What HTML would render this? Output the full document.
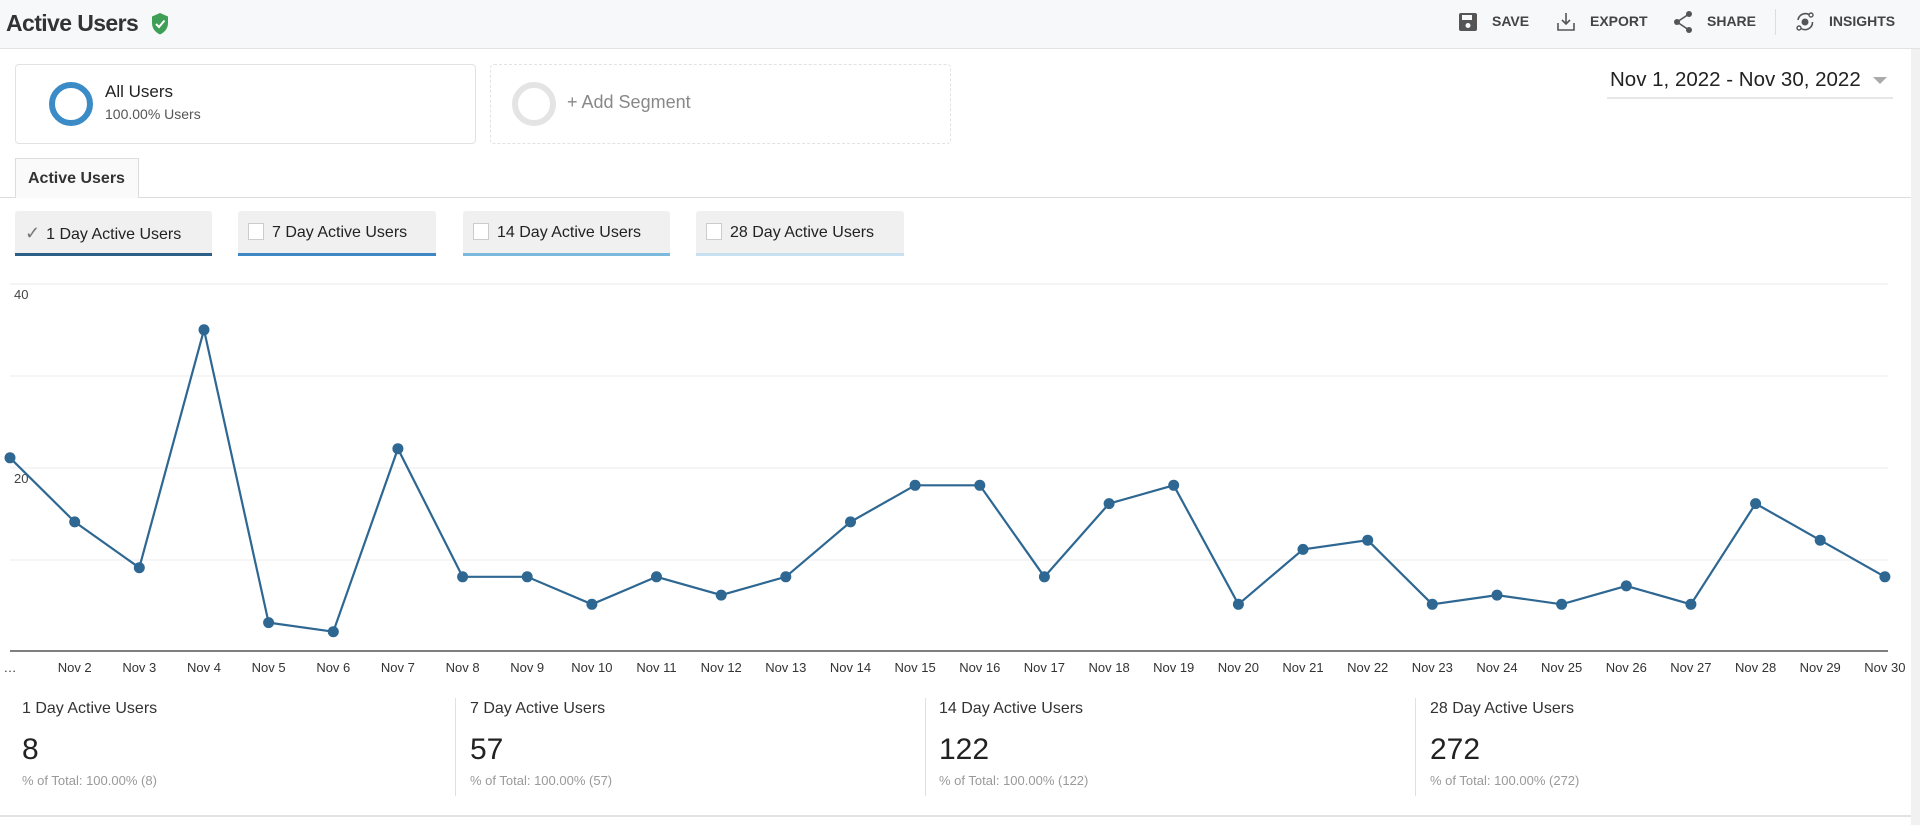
<!DOCTYPE html>
<html><head><meta charset="utf-8"><style>
*{margin:0;padding:0;box-sizing:border-box}
body{width:1920px;height:825px;background:#fff;font-family:"Liberation Sans",Arial,sans-serif;color:#222;position:relative;overflow:hidden}
.hdr{position:absolute;left:0;top:0;width:1920px;height:49px;background:#f7f8f9;border-bottom:1px solid #e3e3e3}
.title{position:absolute;left:6px;top:10px;font-size:23px;font-weight:bold;color:#333;letter-spacing:-0.6px}
.act{position:absolute;top:13px;font-size:14px;font-weight:bold;color:#444}
.rs{position:absolute;right:0;top:49px;width:9px;height:776px;background:#f1f1f1}
.seg{position:absolute;top:64px;height:80px;border:1px solid #e2e2e2;border-radius:4px}
.tab{position:absolute;left:15px;top:158px;width:124px;height:40px;border:1px solid #ddd;border-bottom:none;background:#fafafa;font-size:16px;font-weight:bold;padding:11px 0 0 12px;color:#333}
.mb{position:absolute;top:211px;height:45px;background:#f0f0f0;border-radius:3px 3px 0 0;font-size:16px;color:#222;padding:12px 0 0 10px}
.cb{display:inline-block;width:16px;height:17px;border:1px solid #ccc;background:#fff;vertical-align:-3px;margin-right:8px}
.st{position:absolute;top:700px}
.st .a{font-size:16px;color:#333}
.st .b{font-size:30px;color:#222;margin-top:15px}
.st .c{font-size:13px;color:#999;margin-top:6px}
.sep{position:absolute;top:698px;width:1px;height:98px;background:#e0e0e0}
</style></head><body>
<div class="hdr">
<div class="title">Active Users</div>
<svg style="position:absolute;left:150px;top:12px" width="20" height="24" viewBox="0 0 20 24"><path d="M10 1 L18 4.5 V11 C18 16.5 14.5 20.5 10 22.5 C5.5 20.5 2 16.5 2 11 V4.5 Z" fill="#3f9f57"/><path d="M6 12 L9 15 L14.5 8.5" stroke="#fff" stroke-width="2" fill="none"/></svg>
<svg style="position:absolute;left:1458px;top:12px" width="20" height="20" viewBox="0 0 20 20"><rect x="1" y="1" width="18" height="18" rx="2" fill="#555"/><rect x="4" y="3" width="10" height="5" fill="#f7f8f9"/><circle cx="10" cy="13.5" r="2.5" fill="#f7f8f9"/></svg>
<div class="act" style="left:1492px">SAVE</div>
<svg style="position:absolute;left:1556px;top:11px" width="20" height="22" viewBox="0 0 20 22"><path d="M10 2 V13 M6 9 L10 13 L14 9 M2 12 V19 H18 V12" stroke="#555" stroke-width="1.6" fill="none"/></svg>
<div class="act" style="left:1590px">EXPORT</div>
<svg style="position:absolute;left:1672px;top:10px" width="22" height="24" viewBox="0 0 22 24"><circle cx="17" cy="4" r="3" fill="#555"/><circle cx="5" cy="12" r="3" fill="#555"/><circle cx="17" cy="20" r="3" fill="#555"/><path d="M17 4 L5 12 L17 20" stroke="#555" stroke-width="1.6" fill="none"/></svg>
<div class="act" style="left:1707px">SHARE</div>
<div style="position:absolute;left:1775px;top:9px;width:1px;height:26px;background:#ddd"></div>
<svg style="position:absolute;left:1794px;top:10px" width="22" height="24" viewBox="0 0 22 24"><circle cx="11" cy="12" r="3.5" fill="#555"/><path d="M4 10 A7.5 7.5 0 0 1 15 4.5 M18.5 12 A7.5 7.5 0 0 1 7 18.5" stroke="#555" stroke-width="1.6" fill="none"/><circle cx="17" cy="5" r="2" fill="none" stroke="#555" stroke-width="1.4"/><circle cx="5" cy="18" r="2" fill="none" stroke="#555" stroke-width="1.4"/></svg>
<div class="act" style="left:1829px">INSIGHTS</div>
</div>
<div class="rs"></div>
<div class="seg" style="left:15px;width:461px">
<div style="position:absolute;left:33px;top:17px;width:44px;height:44px;border:6px solid #3b8bc7;border-radius:50%"></div>
<div style="position:absolute;left:89px;top:17px;font-size:17px;color:#222">All Users</div>
<div style="position:absolute;left:89px;top:41px;font-size:14px;color:#555">100.00% Users</div>
</div>
<div class="seg" style="left:490px;width:461px;border:1px dashed #e2e2e2">
<div style="position:absolute;left:21px;top:17px;width:44px;height:44px;border:6px solid #e4e4e4;border-radius:50%"></div>
<div style="position:absolute;left:76px;top:27px;font-size:18px;color:#888">+ Add Segment</div>
</div>
<div style="position:absolute;left:1610px;top:68px;font-size:20.5px;color:#222">Nov 1, 2022 - Nov 30, 2022</div>
<div style="position:absolute;left:1873px;top:77px;width:0;height:0;border-left:7px solid transparent;border-right:7px solid transparent;border-top:7px solid #aaa"></div>
<div style="position:absolute;left:1607px;top:97px;width:286px;height:2px;background:#e6e6e6"></div>
<div style="position:absolute;left:0;top:197px;width:1911px;height:1px;background:#ddd"></div>
<div class="tab">Active Users</div>
<div class="mb" style="left:15px;width:197px;border-bottom:3px solid #2c5f88"><span style="color:#777;font-size:18px;margin-right:6px">✓</span>1 Day Active Users</div>
<div class="mb" style="left:238px;width:198px;border-bottom:3px solid #3d88c4"><span class="cb"></span>7 Day Active Users</div>
<div class="mb" style="left:463px;width:207px;border-bottom:3px solid #7bb9dd"><span class="cb"></span>14 Day Active Users</div>
<div class="mb" style="left:696px;width:208px;border-bottom:3px solid #c8e1f0"><span class="cb"></span>28 Day Active Users</div>
<svg style="position:absolute;left:0;top:270px" width="1911" height="420" viewBox="0 270 1911 420">
<g stroke="#ebebeb" stroke-width="1"><line x1="10" y1="284" x2="1888" y2="284"/><line x1="10" y1="376" x2="1888" y2="376"/><line x1="10" y1="468" x2="1888" y2="468"/><line x1="10" y1="560" x2="1888" y2="560"/></g>
<line x1="10" y1="651" x2="1888" y2="651" stroke="#555" stroke-width="1.5"/>
<text x="14" y="299" font-size="13" fill="#444" font-family="Liberation Sans">40</text>
<text x="14" y="483" font-size="13" fill="#444" font-family="Liberation Sans">20</text>
<polyline fill="none" stroke="#2d6792" stroke-width="2.2" points="10,457.8 74.7,521.9 139.3,567.7 204,329.8 268.6,622.6 333.3,631.7 397.9,448.7 462.6,576.8 527.2,576.8 591.9,604.3 656.5,576.8 721.2,595.1 785.8,576.8 850.5,521.9 915.1,485.3 979.8,485.3 1044.4,576.8 1109.1,503.6 1173.7,485.3 1238.4,604.3 1303,549.4 1367.7,540.2 1432.3,604.3 1497,595.1 1561.6,604.3 1626.3,585.9 1690.9,604.3 1755.6,503.6 1820.2,540.2 1884.9,576.8"/>
<g fill="#2d6792">
<circle cx="10" cy="457.8" r="5.5"/><circle cx="74.7" cy="521.9" r="5.5"/><circle cx="139.3" cy="567.7" r="5.5"/><circle cx="204" cy="329.8" r="5.5"/><circle cx="268.6" cy="622.6" r="5.5"/><circle cx="333.3" cy="631.7" r="5.5"/><circle cx="397.9" cy="448.7" r="5.5"/><circle cx="462.6" cy="576.8" r="5.5"/><circle cx="527.2" cy="576.8" r="5.5"/><circle cx="591.9" cy="604.3" r="5.5"/><circle cx="656.5" cy="576.8" r="5.5"/><circle cx="721.2" cy="595.1" r="5.5"/><circle cx="785.8" cy="576.8" r="5.5"/><circle cx="850.5" cy="521.9" r="5.5"/><circle cx="915.1" cy="485.3" r="5.5"/><circle cx="979.8" cy="485.3" r="5.5"/><circle cx="1044.4" cy="576.8" r="5.5"/><circle cx="1109.1" cy="503.6" r="5.5"/><circle cx="1173.7" cy="485.3" r="5.5"/><circle cx="1238.4" cy="604.3" r="5.5"/><circle cx="1303" cy="549.4" r="5.5"/><circle cx="1367.7" cy="540.2" r="5.5"/><circle cx="1432.3" cy="604.3" r="5.5"/><circle cx="1497" cy="595.1" r="5.5"/><circle cx="1561.6" cy="604.3" r="5.5"/><circle cx="1626.3" cy="585.9" r="5.5"/><circle cx="1690.9" cy="604.3" r="5.5"/><circle cx="1755.6" cy="503.6" r="5.5"/><circle cx="1820.2" cy="540.2" r="5.5"/><circle cx="1884.9" cy="576.8" r="5.5"/>
</g>
<g font-size="13" fill="#333" font-family="Liberation Sans" text-anchor="middle">
<text x="10" y="672">…</text><text x="74.7" y="672">Nov 2</text><text x="139.3" y="672">Nov 3</text><text x="204" y="672">Nov 4</text><text x="268.6" y="672">Nov 5</text><text x="333.3" y="672">Nov 6</text><text x="397.9" y="672">Nov 7</text><text x="462.6" y="672">Nov 8</text><text x="527.2" y="672">Nov 9</text><text x="591.9" y="672">Nov 10</text><text x="656.5" y="672">Nov 11</text><text x="721.2" y="672">Nov 12</text><text x="785.8" y="672">Nov 13</text><text x="850.5" y="672">Nov 14</text><text x="915.1" y="672">Nov 15</text><text x="979.8" y="672">Nov 16</text><text x="1044.4" y="672">Nov 17</text><text x="1109.1" y="672">Nov 18</text><text x="1173.7" y="672">Nov 19</text><text x="1238.4" y="672">Nov 20</text><text x="1303" y="672">Nov 21</text><text x="1367.7" y="672">Nov 22</text><text x="1432.3" y="672">Nov 23</text><text x="1497" y="672">Nov 24</text><text x="1561.6" y="672">Nov 25</text><text x="1626.3" y="672">Nov 26</text><text x="1690.9" y="672">Nov 27</text><text x="1755.6" y="672">Nov 28</text><text x="1820.2" y="672">Nov 29</text><text x="1884.9" y="672">Nov 30</text>
</g>
</svg>
<div class="st" style="left:22px"><div class="a">1 Day Active Users</div><div class="b">8</div><div class="c">% of Total: 100.00% (8)</div></div>
<div class="sep" style="left:455px"></div>
<div class="st" style="left:470px"><div class="a">7 Day Active Users</div><div class="b">57</div><div class="c">% of Total: 100.00% (57)</div></div>
<div class="sep" style="left:925px"></div>
<div class="st" style="left:939px"><div class="a">14 Day Active Users</div><div class="b">122</div><div class="c">% of Total: 100.00% (122)</div></div>
<div class="sep" style="left:1415px"></div>
<div class="st" style="left:1430px"><div class="a">28 Day Active Users</div><div class="b">272</div><div class="c">% of Total: 100.00% (272)</div></div>
<div style="position:absolute;left:0;top:815px;width:1911px;height:2px;background:#e3e3e3"></div>
</body></html>
